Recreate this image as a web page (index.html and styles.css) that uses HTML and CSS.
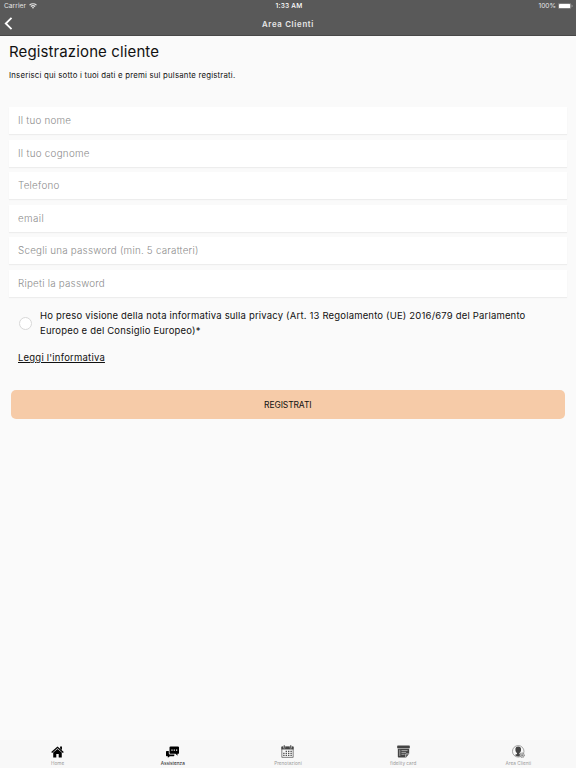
FILE: index.html
```html
<!DOCTYPE html>
<html lang="it">
<head>
<meta charset="utf-8">
<title>Area Clienti</title>
<link rel="stylesheet" href="styles.css">
</head>
<body>
<header class="topbar">
  <div class="status">
    <div class="carrier"><span>Carrier</span>
      <svg class="wifi" viewBox="0 0 16 12"><path d="M1 4.2a10.5 10.5 0 0 1 14 0M3.7 7a6.7 6.7 0 0 1 8.600 0" fill="none" stroke="currentColor" stroke-width="2.3"/><path d="M5.7 9a4 4 0 0 1 4.6 0L8 11.7z" fill="currentColor"/></svg>
    </div>
    <div class="clock">1:33 AM</div>
    <div class="power"><span>100%</span>
      <svg class="battery" viewBox="0 0 30 12"><rect x=".7" y=".7" width="25" height="10.6" rx="2.5" fill="none" stroke="#aaa" stroke-width="1.1"/><rect x="2" y="2" width="22.4" height="8" rx="1.2" fill="#fff"/><path d="M27.5 4v4q2-.6 2-2t-2-2" fill="#aaa"/></svg>
    </div>
  </div>
  <div class="nav">
    <svg class="back" viewBox="0 0 8 12"><path d="M6.8.8 1.5 6l5.3 5.2" fill="none" stroke="#fff" stroke-width="1.7"/></svg>
    <div class="nav-title">Area Clienti</div>
  </div>
</header>
<main class="content">
  <h1 class="title">Registrazione cliente</h1>
  <p class="intro">Inserisci qui sotto i tuoi dati e premi sul pulsante registrati.</p>
  <form class="form">
    <input class="field" placeholder="Il tuo nome">
    <input class="field cognome" placeholder="Il tuo cognome">
    <input class="field" placeholder="Telefono">
    <input class="field email" placeholder="email">
    <input class="field" placeholder="Scegli una password (min. 5 caratteri)">
    <input class="field" placeholder="Ripeti la password">
  </form>
  <div class="consent">
    <span class="radio"></span>
    <p class="consent-text">Ho preso visione della nota informativa sulla privacy (Art. 13 Regolamento (UE) 2016/679 del Parlamento<br>Europeo e del Consiglio Europeo)*</p>
  </div>
  <a class="policy">Leggi l'informativa</a>
  <button class="submit" type="button">REGISTRATI</button>
</main>
<nav class="tabs">
  <div class="tab"><svg viewBox="0 0 14 14"><path d="M.7 8 7 2.5 13.300 8" fill="none" stroke="#000" stroke-width="1.5"/><path d="M2.400 8.200 7 4.300l4.600 3.900V13.500H8.300V9.800H5.700V13.500H2.400zM9.800 1.500h2v4l-2-1.700z"/></svg><span>Home</span></div>
  <div class="tab active"><svg viewBox="0 0 14 14"><path d="M5 1.500h7.800q1.200 0 1.200 1v6q0 1-1 1h-.6v2.200l-2.200-2.200H5q-1.200 0-1.200-1v-6q0-1 1.200-1z"/><path d="M.8 6.500h2.200V9q0 1.300 1.300 1.300h4.700v.7q0 1-.8 1H4.200L2 13.700V12H.8q-.8 0-.8-.8V7.300q0-.8.8-.8z"/><path d="M5.800 4.800h1.300v1.300H5.800zm2.500 0h1.300v1.300H8.300zm2.500 0h1.300v1.300h-1.300z" fill="#fff"/></svg><span>Assistenza</span></div>
  <div class="tab"><svg viewBox="0 0 14 14" fill="#444"><path d="M.9 2h12.200v11.300H.9z" fill="none" stroke="#666" stroke-width=".9"/><path d="M.500 1.800h13v3H.5z"/><path d="M3.500.4v3M10.500.4v3" stroke="#f8f8f8" stroke-width="2"/><path d="M3.500.2v2.900M10.500.2v2.900" stroke="#444" stroke-width="1.200"/><path d="M5 6.200h1.400v1.300H5zm2.600 0H9v1.300H7.600zm2.600 0h1.400v1.300h-1.400zM2.400 8.400h1.400v1.300H2.400zM5 8.400h1.400v1.300H5zm2.600 0H9v1.300H7.600zm2.600 0h1.400v1.300h-1.400zM2.400 10.600h1.400v1.300H2.400zm2.600 0h1.400v1.300H5zm2.600 0H9v1.300H7.600zm2.600 0h1.400v1.300h-1.400z"/></svg><span>Prenotazioni</span></div>
  <div class="tab"><svg viewBox="0 0 14 14" fill="#444"><path d="M.7.6h12.600q.5 0 .5.5v2.300H.2V1.100q0-.5.5-.5zM.9 4h12.200v5.500L9.800 13.500H1.700q-.8 0-.8-.8z"/><path d="M3 5v6.800M4.800 6h6.600M4.800 8h5M4.800 10h3.500" fill="none" stroke="#ccc" stroke-width=".75"/><path d="M9.400 13.200V9.600h3.500" fill="none" stroke="#f8f8f8" stroke-width=".7"/></svg><span>fidelity card</span></div>
  <div class="tab"><svg viewBox="0 0 14 14" fill="#444"><circle cx="6.700" cy="6.800" r="6.200" fill="none" stroke="#777" stroke-width=".7"/><path d="M3.700 3.700q.3-2.200 3-2.200t3 2.200v2.200q-.4 2.100-1.700 2.800v1l2.400 1.100q-3.700 2.900-7.400 0l2.400-1.100v-1Q4.100 8 3.700 5.900z"/><circle cx="10.900" cy="11" r="2.500" fill="#bbb" stroke="#777" stroke-width=".9" stroke-dasharray="1.1 .6"/><circle cx="10.900" cy="11" r=".8" fill="#777"/></svg><span>Area Clienti</span></div>
</nav>
</body>
</html>
```
FILE: styles.css
```css
* { box-sizing: border-box; }
body {
  margin: 0;
  height: 768px;
  display: flex;
  flex-direction: column;
  overflow: hidden;
  background: #fafafa;
  color: #111;
  font-family: Inter, "Open Sans", sans-serif;
}
.topbar {
  height: 36px;
  background: #595959;
  border-bottom: 1px solid #484848;
  color: #fff;
}
.status {
  height: 12px;
  display: grid;
  grid-template-columns: 1fr 1fr 1fr;
  align-items: center;
  padding: 0 4px;
  font-size: 6.6px;
  line-height: 12px;
}
.carrier, .power { display: flex; align-items: center; gap: 3px; color: #e6e6e6; }
.carrier { letter-spacing: .05px; }
.power { justify-content: flex-end; gap: 2px; }
.clock { text-align: center; font-weight: 500; letter-spacing: .2px; padding-left: 2px; }
.wifi { width: 8px; height: 6px; }
.battery { width: 15px; height: 6px; margin-right: -1px; }
.nav { height: 23px; display: grid; grid-template-columns: 20px 1fr 20px; align-items: center; }
.back { width: 9px; height: 13px; margin: 0 0 0 4px; }
.nav-title { text-align: center; font-size: 7.8px; font-weight: 600; letter-spacing: .7px; color: #e8e8e8; }
.content { flex: 1; padding: 0 9px; }
.title { margin: 5px 0 0; font-size: 15px; line-height: 22px; font-weight: 400; letter-spacing: .12px; white-space: nowrap; }
.intro { margin: 6px 0 0; font-size: 7.8px; line-height: 12px; letter-spacing: .2px; white-space: nowrap; }
.form { margin-top: 26px; display: grid; gap: 5.55px; grid-auto-rows: 27px; }
.field {
  width: 100%;
  border: 0;
  padding: 1px 9px 0;
  background: #fff;
  font: 300 9.8px/14px Inter, "Open Sans", sans-serif;
  letter-spacing: .23px;
  box-shadow: 0 1px 1px #ededed;
  outline: 0;
}
.field::placeholder { color: #8c8c8c; opacity: 1; }
.cognome { letter-spacing: .28px; }
.email { letter-spacing: .4px; }
.consent { display: flex; align-items: center; margin-top: 12.5px; padding-left: 10px; }
.radio { width: 13px; height: 13px; border: 1px solid #d8d8d8; border-radius: 50%; background: #fff; }
.consent-text { margin: 0 0 0 8px; font-size: 9.5px; line-height: 14.5px; letter-spacing: .18px; white-space: nowrap; }
.policy { display: block; width: max-content; margin: 13px 0 0 9px; font-size: 9.5px; line-height: 14px; letter-spacing: .21px; text-decoration: underline; }
.submit {
  display: block;
  width: 554.5px;
  height: 29px;
  margin: 25px 0 0 1.5px;
  padding: 0;
  border: 0;
  border-radius: 5px;
  background: #f6cba8;
  color: #111;
  font: 400 8.5px Inter, "Open Sans", sans-serif;
  letter-spacing: -.12px;
}
.tabs { height: 28px; display: grid; grid-template-columns: repeat(5, 115.2px); background: #f8f8f8; }
.tab { display: flex; flex-direction: column; align-items: center; padding-top: 5px; font-size: 4.7px; line-height: 7px; color: #999; }
.tab svg { width: 13px; height: 13px; margin-bottom: 2px; }
.active { color: #111; }
```
